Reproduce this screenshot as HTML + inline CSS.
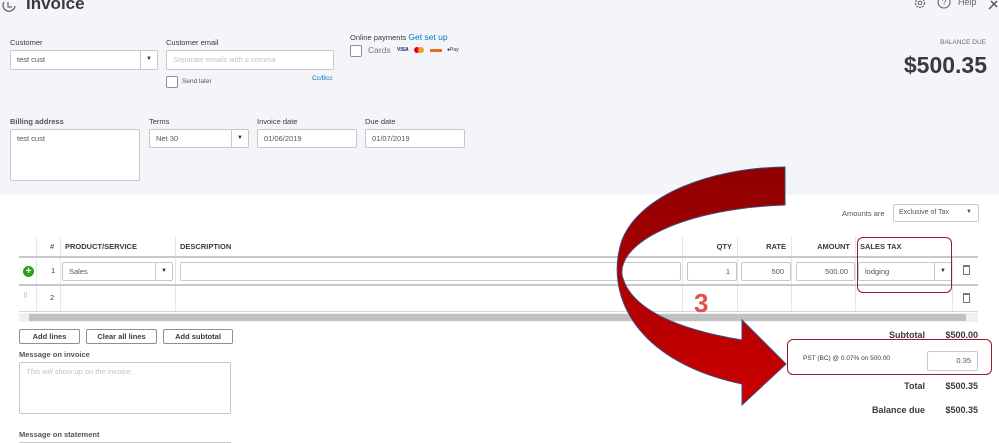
<!DOCTYPE html>
<html><head><meta charset="utf-8"><style>
*{margin:0;padding:0;box-sizing:border-box}
body{width:999px;height:443px;overflow:hidden;position:relative;background:#fff;font-family:"Liberation Sans",sans-serif;color:#393a3d}
.a{position:absolute;white-space:nowrap}
.lbl{font-size:7.5px;color:#393a3d}
.in{position:absolute;background:#fff;border:1px solid #c6c8cc;border-radius:2px;font-size:7.5px;color:#555;padding:4px 6px;white-space:nowrap}
.dd{position:absolute;top:0;bottom:0;border-left:1px solid #c6c8cc;width:17px;font-size:6px;text-align:center;line-height:17px;color:#333}
.th{font-size:7.5px;font-weight:bold;color:#393a3d}
.btn{position:absolute;border:1px solid #8d9096;border-radius:2px;background:#fff;font-size:7.5px;font-weight:bold;color:#393a3d;text-align:center;line-height:13px}
.vl{position:absolute;width:1px;background:#e3e5e8}
.r{text-align:right}
</style></head><body>
<div class="a" style="left:0;top:0;width:999px;height:195px;background:#f4f5f8"></div>
<svg class="a" style="left:0;top:0" width="20" height="12"><path d="M4 2 A6 6 0 1 0 15 6" fill="none" stroke="#666" stroke-width="1.3"/><path d="M8 2v5h4" fill="none" stroke="#666" stroke-width="1.2"/></svg>
<div class="a" style="left:26px;top:-6px;font-size:17px;font-weight:bold;color:#393a3d">Invoice</div>
<svg class="a" style="left:912px;top:0" width="16" height="10"><circle cx="8" cy="3" r="4.5" fill="none" stroke="#666" stroke-width="1.2" stroke-dasharray="2 1"/><circle cx="8" cy="3" r="1.8" fill="none" stroke="#666"/></svg>
<svg class="a" style="left:937px;top:0" width="16" height="10"><circle cx="7" cy="2" r="6" fill="none" stroke="#666" stroke-width="1.1"/><text x="5" y="5" font-size="8" fill="#666" font-family="Liberation Sans">?</text></svg>
<div class="a" style="left:958px;top:-3px;font-size:9px;color:#666">Help</div>
<svg class="a" style="left:987px;top:0" width="12" height="10"><path d="M2 9L10 1M4 1L10 7" stroke="#555" stroke-width="1.5"/></svg>

<div class="a lbl" style="left:10px;top:38px">Customer</div>
<div class="in" style="left:10px;top:50px;width:148px;height:20px">test cust<div class="dd" style="right:0">▼</div></div>
<div class="a lbl" style="left:166px;top:38px">Customer email</div>
<div class="in" style="left:166px;top:50px;width:168px;height:20px;color:#c0c2c6;font-style:italic">Separate emails with a comma</div>
<div class="a" style="left:166px;top:76px;width:12px;height:12px;border:1px solid #8d9096;background:#fff;border-radius:2px"></div>
<div class="a" style="left:182px;top:78px;font-size:6.5px;color:#555">Send later</div>
<div class="a" style="left:312px;top:75px;font-size:6.5px;color:#0077c5">Cc/Bcc</div>
<div class="a lbl" style="left:350px;top:32px">Online payments <span style="color:#0077c5;font-size:8.5px">Get set up</span></div>
<div class="a" style="left:350px;top:45px;width:12px;height:12px;border:1px solid #8d9096;background:#fff;border-radius:2px"></div>
<div class="a" style="left:368px;top:45px;font-size:8.5px;color:#777">Cards</div>
<div class="a" style="left:397px;top:47px;font-size:5px;font-weight:bold;color:#1a1f71">VISA</div>
<div class="a" style="left:414px;top:47px;width:6px;height:6px;border-radius:3px;background:#eb001b"></div>
<div class="a" style="left:418px;top:47px;width:6px;height:6px;border-radius:3px;background:#f79e1b"></div>
<div class="a" style="left:430px;top:49px;width:12px;height:3px;background:#e07020"></div>
<div class="a" style="left:447px;top:47px;font-size:5px;color:#333">●Pay</div>
<div class="a" style="right:13px;top:39px;font-size:6.5px;color:#6b6c72">BALANCE DUE</div>
<div class="a" style="right:12px;top:52px;font-size:23px;font-weight:bold;color:#393a3d">$500.35</div>

<div class="a lbl" style="left:10px;top:117px;font-weight:bold;color:#555">Billing address</div>
<div class="in" style="left:10px;top:129px;width:130px;height:52px">test cust</div>
<div class="a lbl" style="left:149px;top:117px">Terms</div>
<div class="in" style="left:149px;top:129px;width:100px;height:19px">Net 30<div class="dd" style="right:0;line-height:16px">▼</div></div>
<div class="a lbl" style="left:257px;top:117px">Invoice date</div>
<div class="in" style="left:257px;top:129px;width:100px;height:19px">01/06/2019</div>
<div class="a lbl" style="left:365px;top:117px">Due date</div>
<div class="in" style="left:365px;top:129px;width:100px;height:19px">01/07/2019</div>

<div class="a" style="left:842px;top:209px;font-size:7.5px;color:#555">Amounts are</div>
<div class="in" style="left:893px;top:204px;width:86px;height:18px;font-size:7px;padding:4px 5px">Exclusive of Tax<span style="position:absolute;right:6px;font-size:6px">▼</span></div>

<!-- table -->
<div class="vl" style="left:36px;top:237px;height:75px"></div>
<div class="vl" style="left:60px;top:237px;height:75px"></div>
<div class="vl" style="left:175px;top:237px;height:75px"></div>
<div class="vl" style="left:682px;top:237px;height:75px"></div>
<div class="vl" style="left:737px;top:237px;height:75px"></div>
<div class="vl" style="left:791px;top:237px;height:75px"></div>
<div class="vl" style="left:855px;top:237px;height:75px"></div>
<div class="vl" style="left:952px;top:258px;height:54px"></div>
<div class="a th" style="left:50px;top:242px;font-weight:normal">#</div>
<div class="a th" style="left:65px;top:242px">PRODUCT/SERVICE</div>
<div class="a th" style="left:180px;top:242px">DESCRIPTION</div>
<div class="a th r" style="left:682px;top:242px;width:50px">QTY</div>
<div class="a th r" style="left:737px;top:242px;width:49px">RATE</div>
<div class="a th r" style="left:791px;top:242px;width:59px">AMOUNT</div>
<div class="a th" style="left:860px;top:242px">SALES TAX</div>
<div class="a" style="left:19px;top:256px;width:959px;height:2px;background:#c6c8cc"></div>
<div class="a" style="left:19px;top:284px;width:959px;height:2px;background:#c6c8cc"></div>
<div class="a" style="left:19px;top:311px;width:959px;height:1px;background:#d4d7dc"></div>
<div class="a" style="left:23px;top:266px;width:11px;height:11px;border-radius:6px;background:#2ca01c;color:#fff;font-size:10px;font-weight:bold;line-height:11px;text-align:center">+</div>
<div class="a" style="left:51px;top:266px;font-size:7.5px">1</div>
<div class="in" style="left:62px;top:262px;width:111px;height:19px">Sales<div class="dd" style="right:0;line-height:16px">▼</div></div>
<div class="in" style="left:180px;top:262px;width:501px;height:19px"></div>
<div class="in r" style="left:687px;top:262px;width:50px;height:19px">1</div>
<div class="in r" style="left:741px;top:262px;width:50px;height:19px">500</div>
<div class="in r" style="left:796px;top:262px;width:59px;height:19px">500.00</div>
<div class="in" style="left:858px;top:262px;width:94px;height:19px">lodging<div class="dd" style="right:0;line-height:16px">▼</div></div>
<div class="a" style="left:963px;top:265px;width:7px;height:10px;border:1px solid #777;border-top:2px solid #777"></div>
<div class="a" style="left:963px;top:293px;width:7px;height:10px;border:1px solid #777;border-top:2px solid #777"></div>
<div class="a" style="left:23px;top:292px;font-size:7px;color:#aaa">⠿</div>
<div class="a" style="left:50px;top:293px;font-size:7.5px">2</div>
<div class="a" style="left:19px;top:313px;width:959px;height:9px;background:#f0f0f0"></div>
<div class="a" style="left:29px;top:314px;width:937px;height:7px;background:#c1c1c1"></div>

<div class="btn" style="left:19px;top:329px;width:61px;height:15px">Add lines</div>
<div class="btn" style="left:86px;top:329px;width:71px;height:15px">Clear all lines</div>
<div class="btn" style="left:163px;top:329px;width:70px;height:15px">Add subtotal</div>
<div class="a lbl" style="left:19px;top:350px;font-weight:bold;color:#555">Message on invoice</div>
<div class="in" style="left:19px;top:362px;width:212px;height:52px;color:#c0c2c6;font-style:italic">This will show up on the invoice.</div>
<div class="a lbl" style="left:19px;top:430px;font-weight:bold;color:#555">Message on statement</div>
<div class="a" style="left:19px;top:442px;width:212px;height:1px;background:#c6c8cc"></div>

<div class="a r" style="right:74px;top:330px;font-size:9px;font-weight:bold">Subtotal</div>
<div class="a r" style="right:21px;top:330px;font-size:9px;font-weight:bold">$500.00</div>
<div class="a" style="left:803px;top:355px;font-size:6.5px;color:#393a3d">PST (BC) @ 0.07% on 500.00</div>
<div class="in r" style="left:927px;top:351px;width:51px;height:20px">0.35</div>
<div class="a r" style="right:74px;top:381px;font-size:9px;font-weight:bold">Total</div>
<div class="a r" style="right:21px;top:381px;font-size:9px;font-weight:bold">$500.35</div>
<div class="a r" style="right:74px;top:405px;font-size:9px;font-weight:bold">Balance due</div>
<div class="a r" style="right:21px;top:405px;font-size:9px;font-weight:bold">$500.35</div>

<div class="a" style="left:857px;top:237px;width:95px;height:56px;border:1.5px solid #9b1b2b;border-radius:6px"></div>
<div class="a" style="left:787px;top:339px;width:205px;height:36px;border:1.5px solid #9b1b2b;border-radius:6px"></div>

<svg class="a" style="left:0;top:0" width="999" height="443">
<defs><linearGradient id="g" x1="0" y1="0" x2="0" y2="1"><stop offset="0" stop-color="#8e0000"/><stop offset="0.4" stop-color="#a80000"/><stop offset="1" stop-color="#cc0000"/></linearGradient></defs>
<path d="M785 167 C710 168 640 195 622 240 C605 290 630 360 742 384 L742 405 L786 364 L742 320 L742 340 C680 330 630 310 622 275 C618 240 690 208 785 205 Z" fill="url(#g)" stroke="#3f4a7a" stroke-width="1"/>
<text x="694" y="312" font-size="26" font-weight="bold" fill="#e05050" font-family="Liberation Sans">3</text>
</svg>
</body></html>
